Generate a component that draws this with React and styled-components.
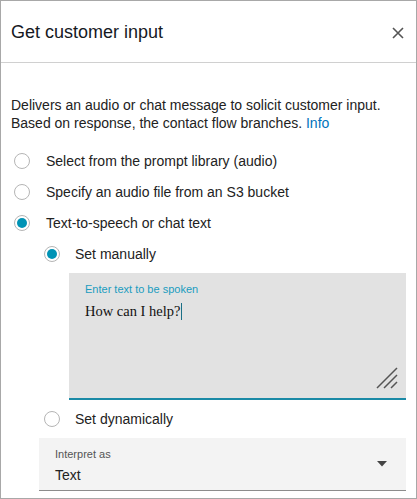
import React from "react";
import styled, { createGlobalStyle } from "styled-components";

const Global = createGlobalStyle`
  html, body { margin: 0; padding: 0; background: #fff; }
  * { box-sizing: border-box; }
  body { font-family: "Liberation Sans", Arial, sans-serif; color: #222; }
`;

const Panel = styled.div`
  width: 417px;
  height: 499px;
  border: 1px solid #a8a8a8;
  background: #fff;
  display: flex;
  flex-direction: column;
  overflow: hidden;
`;

const Header = styled.div`
  height: 62px;
  flex: none;
  border-bottom: 1px solid #d0d0d0;
  display: flex;
  align-items: center;
  justify-content: space-between;
  padding: 2px 11px 0 10px;
`;

const Title = styled.h2`
  margin: 0;
  font-size: 18px;
  font-weight: 400;
  color: #16191f;
`;

const CloseButton = styled.button`
  border: 0;
  background: none;
  padding: 0;
  width: 14px;
  height: 14px;
  display: flex;
  align-items: center;
  justify-content: center;
  cursor: pointer;
`;

const Body = styled.div`
  padding: 33px 10px 0 10px;
  display: flex;
  flex-direction: column;
`;

const Description = styled.p`
  margin: 0 0 13px 0;
  font-size: 14px;
  line-height: 18px;
  color: #222;
`;

const Link = styled.a`
  color: #0073bb;
  text-decoration: none;
`;

const Row = styled.label`
  height: 31px;
  display: flex;
  align-items: center;
  margin-top: ${(p) => p.$top || 0}px;
  padding-left: ${(p) => p.$indent}px;
  gap: ${(p) => p.$gap}px;
  font-size: 14px;
  color: #222;
`;

const Radio = styled.span`
  width: 16px;
  height: 16px;
  border-radius: 50%;
  border: 1px solid #b5b5b5;
  background: #fff;
  flex: none;
  display: flex;
  align-items: center;
  justify-content: center;
  &::after {
    content: "";
    width: 10px;
    height: 10px;
    border-radius: 50%;
    background: ${(p) => (p.$checked ? "#0093b5" : "transparent")};
  }
`;

const TextBox = styled.div`
  position: relative;
  margin: 4px 0 0 58px;
  height: 127px;
  background: #e2e2e2;
  border-bottom: 2px solid #1b8aa6;
  padding: 10px 16px;
`;

const FieldLabel = styled.div`
  font-size: 11px;
  line-height: 13px;
  color: ${(p) => p.$color};
`;

const Typed = styled.div`
  margin-top: 5px;
  font-family: "Liberation Serif", "Times New Roman", serif;
  font-size: 14.5px;
  line-height: 20px;
  color: #111;
  display: flex;
  align-items: center;
`;

const Caret = styled.span`
  display: inline-block;
  width: 1px;
  height: 17px;
  background: #1b6f86;
  margin-left: 1px;
`;

const Grip = styled.svg`
  position: absolute;
  right: 8px;
  bottom: 9px;
`;

const SelectBox = styled.div`
  margin: 4px 0 0 28px;
  height: 53px;
  background: #f3f3f3;
  border-bottom: 1px solid #8c8c8c;
  display: flex;
  align-items: center;
  justify-content: space-between;
  padding: 0 19px 0 16px;
`;

const SelectText = styled.div`
  display: flex;
  flex-direction: column;
  gap: 6px;
  padding-top: 2px;
`;

const SelectValue = styled.div`
  font-size: 14px;
  line-height: 16px;
  color: #222;
`;

function Option({ checked, label, indent = 3, gap = 16, top = 0 }) {
  return (
    <Row $indent={indent} $gap={gap} $top={top}>
      <Radio $checked={checked} />
      <span>{label}</span>
    </Row>
  );
}

export default function App() {
  return (
    <>
      <Global />
      <Panel>
        <Header>
          <Title>Get customer input</Title>
          <CloseButton aria-label="Close">
            <svg width="12" height="12" viewBox="0 0 12 12">
              <path d="M1 1 L11 11 M11 1 L1 11" stroke="#555" strokeWidth="1.6" />
            </svg>
          </CloseButton>
        </Header>
        <Body>
          <Description>
            Delivers an audio or chat message to solicit customer input. Based on response, the contact flow
            branches. <Link href="#">Info</Link>
          </Description>
          <Option label="Select from the prompt library (audio)" />
          <Option label="Specify an audio file from an S3 bucket" />
          <Option checked label="Text-to-speech or chat text" />
          <Option checked label="Set manually" indent={33} gap={15} />
          <TextBox>
            <FieldLabel $color="#1a9cbf">Enter text to be spoken</FieldLabel>
            <Typed>
              How can I help?
              <Caret />
            </Typed>
            <Grip width="22" height="22" viewBox="0 0 22 22">
              <path d="M1 21 L21 1 M8 21 L21 8 M15 21 L21 15" stroke="#555" strokeWidth="1.5" />
            </Grip>
          </TextBox>
          <Option label="Set dynamically" indent={33} gap={15} top={3} />
          <SelectBox>
            <SelectText>
              <FieldLabel $color="#555">Interpret as</FieldLabel>
              <SelectValue>Text</SelectValue>
            </SelectText>
            <svg width="10" height="6" viewBox="0 0 10 6">
              <path d="M0 0 L10 0 L5 5.5 Z" fill="#444" />
            </svg>
          </SelectBox>
        </Body>
      </Panel>
    </>
  );
}
